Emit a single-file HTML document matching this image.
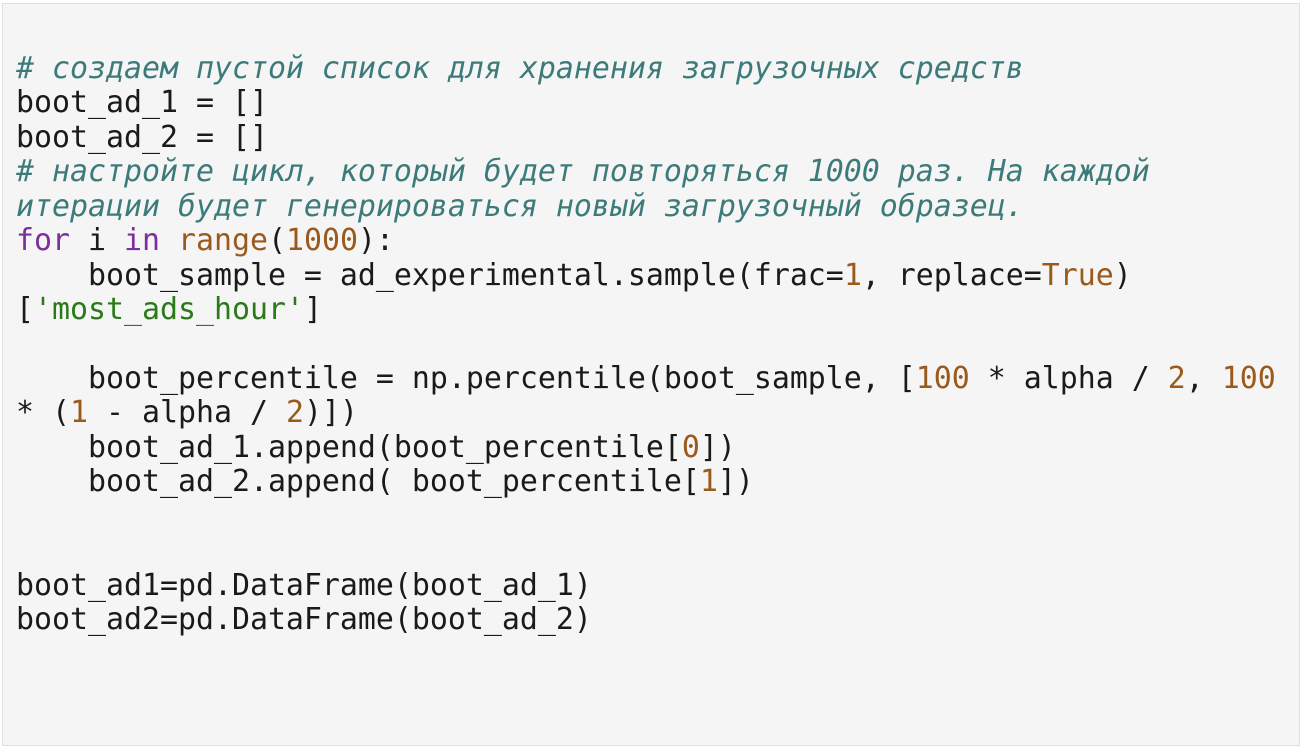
<!DOCTYPE html>
<html><head><meta charset="utf-8"><style>
html,body{margin:0;padding:0;background:#fff;width:1302px;height:748px;overflow:hidden}
.box{position:absolute;left:2px;top:3px;width:1298px;height:743px;box-sizing:border-box;border:1px solid #e0e0e0;background:#f5f5f5}
pre{margin:0;position:absolute;left:16px;top:52px;font-family:"DejaVu Sans Mono","Liberation Mono",monospace;font-size:29.9px;line-height:34.44px;color:#1a1a1a;white-space:pre}
.c{color:#3d7b7b;font-style:italic}
.k{color:#7b2f9f}
.n{color:#9a5a1c}
.s{color:#2b7a1a}
</style></head><body><div class="box"></div>
<pre><span class="c"># создаем пустой список для хранения загрузочных средств</span>
boot_ad_1 = []
boot_ad_2 = []
<span class="c"># настройте цикл, который будет повторяться 1000 раз. На каждой</span>
<span class="c">итерации будет генерироваться новый загрузочный образец.</span>
<span class="k">for</span> i <span class="k">in</span> <span class="n">range</span>(<span class="n">1000</span>):
    boot_sample = ad_experimental.sample(frac=<span class="n">1</span>, replace=<span class="n">True</span>)
[<span class="s">'most_ads_hour'</span>]

    boot_percentile = np.percentile(boot_sample, [<span class="n">100</span> * alpha / <span class="n">2</span>, <span class="n">100</span>
* (<span class="n">1</span> - alpha / <span class="n">2</span>)])
    boot_ad_1.append(boot_percentile[<span class="n">0</span>])
    boot_ad_2.append( boot_percentile[<span class="n">1</span>])


boot_ad1=pd.DataFrame(boot_ad_1)
boot_ad2=pd.DataFrame(boot_ad_2)</pre>
</body></html>
